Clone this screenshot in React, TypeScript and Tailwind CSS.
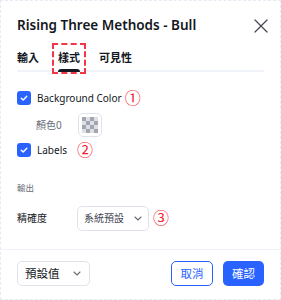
import * as React from 'react';

const FONT = { fontFamily: '"Noto Sans", "Noto Sans CJK TC", sans-serif' };

function Check() {
  return (
    <span className="flex size-[14px] shrink-0 items-center justify-center rounded-[3px] bg-[#2962ff]">
      <svg width="10" height="10" viewBox="0 0 10 10" fill="none">
        <path d="M2.3 5.2 4.2 7 7.8 3.2" stroke="white" strokeWidth="1.4" strokeLinecap="round" strokeLinejoin="round" />
      </svg>
    </span>
  );
}

function Chevron() {
  return (
    <svg width="8" height="5" viewBox="0 0 8 5" fill="none" className="shrink-0">
      <path d="M1 1l3 3 3-3" stroke="#6a6d78" strokeWidth="1.1" strokeLinecap="round" strokeLinejoin="round" />
    </svg>
  );
}

function Marker({ n }: { n: string }) {
  return <span className="text-[16px] leading-none text-[#f5222d]">{n}</span>;
}

const CHECKER = Array.from({ length: 16 }, (_, i) => (Math.floor(i / 4) + i) % 2 === 0);

export default function App() {
  return (
    <div style={FONT} className="h-[300px] w-[281px] overflow-hidden border border-dashed border-[#e6ebf3] bg-white text-[#131722]">
      {/* header */}
      <div className="flex h-[49px] items-center justify-between pl-4 pr-3">
        <h2 className="whitespace-nowrap text-[13.5px] font-semibold">Rising Three Methods - Bull</h2>
        <svg width="14" height="14" viewBox="0 0 14 14" fill="none">
          <path d="M1 1l12 12M13 1 1 13" stroke="#434651" strokeWidth="1.2" strokeLinecap="round" />
        </svg>
      </div>

      {/* tabs */}
      <div className="mx-4 flex gap-[19px] border-b-2 border-[#f0f3fa] text-[11px] font-semibold leading-[16px]">
        <div className="pb-[4px]">輸入</div>
        <div className="relative pb-[4px]">
          樣式
          <span className="absolute bottom-[-2px] left-0 right-0 h-[3px] rounded-t-sm bg-[#131722]" />
          <span className="absolute -inset-x-[6px] -top-[7px] -bottom-[4px] border-2 border-dashed border-[#f23645]" />
        </div>
        <div className="pb-[4px]">可見性</div>
      </div>

      {/* body */}
      <div className="px-4 pt-[17px] text-[10px]">
        <div className="flex h-[18px] items-center gap-[3px]">
          <Check />
          <span className="ml-[3px] whitespace-nowrap">Background Color</span>
          <Marker n="①" />
        </div>
        <div className="mt-[6px] flex items-center pl-[19px]">
          <span className="w-[42px] text-[#6a6d78]">顏色0</span>
          <div className="flex size-[24px] items-center justify-center rounded-[5px] border border-[#e0e3eb]">
            <div className="grid grid-cols-4">
              {CHECKER.map((dark, i) => (
                <span key={i} className={dark ? 'size-[4px] bg-[#a3a6af]' : 'size-[4px] bg-[#dcdfe6]'} />
              ))}
            </div>
          </div>
        </div>
        <div className="mt-[4px] flex h-[18px] items-center gap-[5px]">
          <Check />
          <span className="ml-[1px] mr-[5px]">Labels</span>
          <Marker n="②" />
        </div>

        <div className="mt-[23px] text-[8.5px] leading-[12px] text-[#6a6d78]">輸出</div>

        <div className="mt-[12px] flex items-center">
          <span className="w-[60px] whitespace-nowrap">精確度</span>
          <div className="flex h-[25px] w-[72px] items-center justify-between rounded-[5px] border border-[#e0e3eb] pl-[6px] pr-[6px]">
            <span className="whitespace-nowrap text-[#434651]">系統預設</span>
            <Chevron />
          </div>
          <span className="ml-[4px]">
            <Marker n="③" />
          </span>
        </div>
      </div>

      {/* footer */}
      <div className="mt-[18px] flex items-center justify-between border-t border-[#f0f3fa] px-4 pt-[11px] text-[11.5px]">
        <div className="flex h-[25px] w-[73px] items-center justify-between rounded-[5px] border border-[#e0e3eb] pl-[7px] pr-[8px]">
          <span className="whitespace-nowrap">預設值</span>
          <Chevron />
        </div>
        <div className="flex gap-[10px]">
          <button className="h-[25px] w-[42px] rounded-[5px] border border-[#2962ff] text-[#2962ff]">取消</button>
          <button className="h-[25px] w-[41px] rounded-[5px] bg-[#2962ff] text-white">確認</button>
        </div>
      </div>
    </div>
  );
}
